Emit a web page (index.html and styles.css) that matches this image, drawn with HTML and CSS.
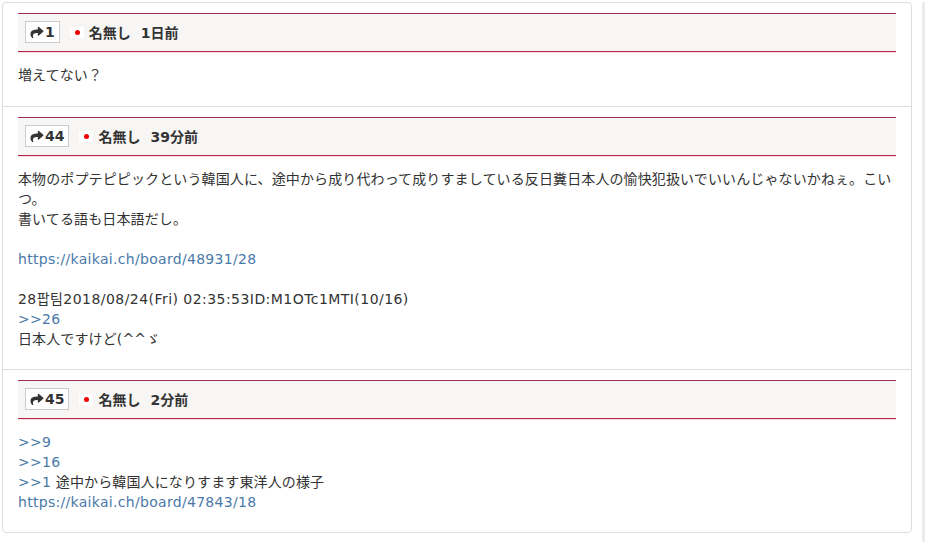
FILE: index.html
```html
<!DOCTYPE html>
<html lang="ja">
<head>
  <meta charset="UTF-8">
  <meta name="viewport" content="width=device-width, initial-scale=1.0">
  <title>コメント</title>
  <link rel="stylesheet" href="styles.css">
</head>
<body>
  <div class="page">
    <div class="comments">

      <div class="post">
        <div class="post-head">
          <span class="res-no">
            <svg class="share" viewBox="0 0 512 512"><path d="M503.7 189.8L327.7 37.9C312.3 24.5 288 35.3 288 56v80.1C127.4 137.9 0 170.1 0 322.3c0 61.4 39.6 122.3 83.3 154.1 13.7 9.9 33.1-2.5 28.1-18.6C66.1 312.8 132.9 274.3 288 272.1V360c0 20.7 24.3 31.5 39.7 18.2l176-152c11.1-9.6 11.1-26.8 0-36.4z"/></svg>1
          </span>
          <span class="flag"></span>
          <span class="name">名無し</span>
          <span class="time">1日前</span>
        </div>
        <div class="post-body">増えてない？</div>
      </div>

      <div class="post">
        <div class="post-head">
          <span class="res-no">
            <svg class="share" viewBox="0 0 512 512"><path d="M503.7 189.8L327.7 37.9C312.3 24.5 288 35.3 288 56v80.1C127.4 137.9 0 170.1 0 322.3c0 61.4 39.6 122.3 83.3 154.1 13.7 9.9 33.1-2.5 28.1-18.6C66.1 312.8 132.9 274.3 288 272.1V360c0 20.7 24.3 31.5 39.7 18.2l176-152c11.1-9.6 11.1-26.8 0-36.4z"/></svg>44
          </span>
          <span class="flag"></span>
          <span class="name">名無し</span>
          <span class="time">39分前</span>
        </div>
        <div class="post-body">
          本物のポプテピピックという韓国人に、途中から成り代わって成りすましている反日糞日本人の愉快犯扱いでいいんじゃないかねぇ。こいつ。<br>
          書いてる語も日本語だし。<br>
          <br>
          <a href="#" class="latin">https://kaikai.ch/board/48931/28</a><br>
          <br>
          <span class="latin wide">28팝팀2018/08/24(Fri) 02:35:53ID:M1OTc1MTI(10/16)</span><br>
          <a href="#" class="latin">&gt;&gt;26</a><br>
          日本人ですけど(^^ゞ
        </div>
      </div>

      <div class="post">
        <div class="post-head">
          <span class="res-no">
            <svg class="share" viewBox="0 0 512 512"><path d="M503.7 189.8L327.7 37.9C312.3 24.5 288 35.3 288 56v80.1C127.4 137.9 0 170.1 0 322.3c0 61.4 39.6 122.3 83.3 154.1 13.7 9.9 33.1-2.5 28.1-18.6C66.1 312.8 132.9 274.3 288 272.1V360c0 20.7 24.3 31.5 39.7 18.2l176-152c11.1-9.6 11.1-26.8 0-36.4z"/></svg>45
          </span>
          <span class="flag"></span>
          <span class="name">名無し</span>
          <span class="time">2分前</span>
        </div>
        <div class="post-body">
          <a href="#" class="latin">&gt;&gt;9</a><br>
          <a href="#" class="latin">&gt;&gt;16</a><br>
          <a href="#" class="latin">&gt;&gt;1</a> 途中から韓国人になりすます東洋人の様子<br>
          <a href="#" class="latin">https://kaikai.ch/board/47843/18</a>
        </div>
      </div>

    </div>
    <div class="side"></div>
  </div>
</body>
</html>
```

FILE: styles.css
```css
body {
  margin: 0;
  padding: 0;
  background-color: #fff;
  font-family: "DejaVu Sans", "Noto Sans CJK JP", sans-serif;
  font-size: 14px;
  color: #333;
}

.page {
  display: flex;
  align-items: flex-start;
  gap: 10px;
  padding: 2px 0 0 2px;
  height: 540px;
}

.comments {
  width: 908px;
  border: 1px solid #ddd;
  border-radius: 4px;
  background-color: #fff;
}

.post {
  padding: 10px 15px 20px;
}

.post:first-child {
  padding-bottom: 21px;
}

.post + .post {
  border-top: 1px solid #ddd;
}

.post-head {
  display: flex;
  align-items: center;
  padding: 7px 7px 8px;
  background-color: #f7f6f5;
  border-top: 1px solid #9e2a55;
  border-bottom: 1px solid #b8244a;
  box-shadow: 0 1px 0 #f6dde3;
  font-weight: bold;
  color: #333;
}

.res-no {
  display: flex;
  align-items: center;
  height: 20px;
  padding: 0 4px;
  border: 1px solid #ccc;
  background-color: #fff;
  line-height: 20px;
}

.share {
  width: 14px;
  height: 13px;
  margin-right: 1px;
  fill: #333;
}

.flag {
  position: relative;
  width: 14px;
  height: 11px;
  margin-left: 10px;
  background-color: #fff;
}

.flag::after {
  content: "";
  position: absolute;
  left: 5px;
  top: 3px;
  width: 5px;
  height: 5px;
  border-radius: 50%;
  background-color: #e00;
}

.name {
  margin-left: 5px;
  font-family: "Noto Sans CJK JP", sans-serif;
}

.time {
  margin-left: 10px;
}

.post-body {
  margin-top: 13px;
  line-height: 20px;
  letter-spacing: 0.12px;
}

.post-body a {
  color: #4a79a8;
  text-decoration: none;
}

.latin {
  letter-spacing: 0.3px;
}

.wide {
  letter-spacing: 0.45px;
}

.side {
  width: 3px;
  height: 100%;
  background-color: #ececec;
}
```
